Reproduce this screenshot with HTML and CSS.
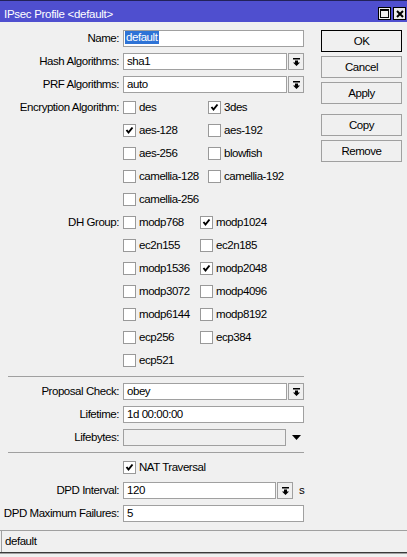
FILE: index.html
```html
<!DOCTYPE html>
<html lang="en">
<head>
<meta charset="utf-8">
<title>IPsec Profile &lt;default&gt;</title>
<link rel="stylesheet" href="styles.css">
</head>
<body>
<div class="window">
  <div class="titlebar">
    <span class="title">IPsec Profile &lt;default&gt;</span>
    <div class="tb-buttons">
      <span class="tb-btn"><svg width="9" height="9" viewBox="0 0 9 9"><rect x="0.5" y="0.5" width="8" height="8" fill="none" stroke="#000"/><rect x="0" y="0" width="9" height="2" fill="#000"/></svg></span>
      <span class="tb-btn"><svg width="8" height="8" viewBox="0 0 8 8"><path d="M1 1L7 7M7 1L1 7" stroke="#000" stroke-width="2"/></svg></span>
    </div>
  </div>

  <div class="main">
    <div class="form">
      <div class="row">
        <span class="label">Name:</span>
        <div class="field name"><span class="selected">default</span></div>
      </div>
      <div class="row">
        <span class="label">Hash Algorithms:</span>
        <div class="combo"><div class="field">sha1</div><span class="drop"><svg width="7" height="8" viewBox="0 0 7 8"><rect width="7" height="1.5"/><path d="M2 2.5h3v2h2L3.5 8 0 4.5h2z"/></svg></span></div>
      </div>
      <div class="row">
        <span class="label">PRF Algorithms:</span>
        <div class="combo"><div class="field">auto</div><span class="drop"><svg width="7" height="8" viewBox="0 0 7 8"><rect width="7" height="1.5"/><path d="M2 2.5h3v2h2L3.5 8 0 4.5h2z"/></svg></span></div>
      </div>

      <div class="group enc">
        <div class="row">
          <span class="label">Encryption Algorithm:</span>
          <div class="checks">
            <span class="check"><span class="box"></span>des</span>
            <span class="check"><span class="box on"><svg width="11" height="11" viewBox="0 0 11 11"><path d="M2.5 5L4.5 7.5L8.5 2.5" fill="none" stroke="#000" stroke-width="2"/></svg></span>3des</span>
          </div>
        </div>
        <div class="row">
          <span class="label"></span>
          <div class="checks">
            <span class="check"><span class="box on"><svg width="11" height="11" viewBox="0 0 11 11"><path d="M2.5 5L4.5 7.5L8.5 2.5" fill="none" stroke="#000" stroke-width="2"/></svg></span>aes-128</span>
            <span class="check"><span class="box"></span>aes-192</span>
          </div>
        </div>
        <div class="row">
          <span class="label"></span>
          <div class="checks">
            <span class="check"><span class="box"></span>aes-256</span>
            <span class="check"><span class="box"></span>blowfish</span>
          </div>
        </div>
        <div class="row">
          <span class="label"></span>
          <div class="checks">
            <span class="check"><span class="box"></span>camellia-128</span>
            <span class="check"><span class="box"></span>camellia-192</span>
          </div>
        </div>
        <div class="row">
          <span class="label"></span>
          <div class="checks">
            <span class="check"><span class="box"></span>camellia-256</span>
          </div>
        </div>
      </div>

      <div class="group dh">
        <div class="row">
          <span class="label">DH Group:</span>
          <div class="checks">
            <span class="check"><span class="box"></span>modp768</span>
            <span class="check"><span class="box on"><svg width="11" height="11" viewBox="0 0 11 11"><path d="M2.5 5L4.5 7.5L8.5 2.5" fill="none" stroke="#000" stroke-width="2"/></svg></span>modp1024</span>
          </div>
        </div>
        <div class="row">
          <span class="label"></span>
          <div class="checks">
            <span class="check"><span class="box"></span>ec2n155</span>
            <span class="check"><span class="box"></span>ec2n185</span>
          </div>
        </div>
        <div class="row">
          <span class="label"></span>
          <div class="checks">
            <span class="check"><span class="box"></span>modp1536</span>
            <span class="check"><span class="box on"><svg width="11" height="11" viewBox="0 0 11 11"><path d="M2.5 5L4.5 7.5L8.5 2.5" fill="none" stroke="#000" stroke-width="2"/></svg></span>modp2048</span>
          </div>
        </div>
        <div class="row">
          <span class="label"></span>
          <div class="checks">
            <span class="check"><span class="box"></span>modp3072</span>
            <span class="check"><span class="box"></span>modp4096</span>
          </div>
        </div>
        <div class="row">
          <span class="label"></span>
          <div class="checks">
            <span class="check"><span class="box"></span>modp6144</span>
            <span class="check"><span class="box"></span>modp8192</span>
          </div>
        </div>
        <div class="row">
          <span class="label"></span>
          <div class="checks">
            <span class="check"><span class="box"></span>ecp256</span>
            <span class="check"><span class="box"></span>ecp384</span>
          </div>
        </div>
        <div class="row">
          <span class="label"></span>
          <div class="checks">
            <span class="check"><span class="box"></span>ecp521</span>
          </div>
        </div>
      </div>

      <div class="sep"></div>

      <div class="row">
        <span class="label">Proposal Check:</span>
        <div class="combo"><div class="field">obey</div><span class="drop"><svg width="7" height="8" viewBox="0 0 7 8"><rect width="7" height="1.5"/><path d="M2 2.5h3v2h2L3.5 8 0 4.5h2z"/></svg></span></div>
      </div>
      <div class="row">
        <span class="label">Lifetime:</span>
        <div class="field">1d 00:00:00</div>
      </div>
      <div class="row">
        <span class="label">Lifebytes:</span>
        <div class="combo">
          <div class="field disabled"></div>
          <span class="expand"><svg width="9" height="5" viewBox="0 0 9 5"><path d="M0 0h9L4.5 5z"/></svg></span>
        </div>
      </div>

      <div class="sep sep-b"></div>

      <div class="row">
        <span class="label"></span>
        <div class="checks">
          <span class="check"><span class="box on"><svg width="11" height="11" viewBox="0 0 11 11"><path d="M2.5 5L4.5 7.5L8.5 2.5" fill="none" stroke="#000" stroke-width="2"/></svg></span>NAT Traversal</span>
        </div>
      </div>
      <div class="row">
        <span class="label">DPD Interval:</span>
        <div class="combo"><div class="field">120</div><span class="drop"><svg width="7" height="8" viewBox="0 0 7 8"><rect width="7" height="1.5"/><path d="M2 2.5h3v2h2L3.5 8 0 4.5h2z"/></svg></span><span class="unit">s</span></div>
      </div>
      <div class="row">
        <span class="label">DPD Maximum Failures:</span>
        <div class="field">5</div>
      </div>
    </div>

    <div class="actions">
      <span class="btn default">OK</span>
      <span class="btn">Cancel</span>
      <span class="btn">Apply</span>
      <span class="btn spaced">Copy</span>
      <span class="btn">Remove</span>
    </div>
  </div>

  <div class="status"><span class="status-cell">default</span></div>
  <div class="frame-bottom"></div>
</div>
</body>
</html>
```

FILE: styles.css
```css
body {
  margin: 0;
  background: #f0f0f0;
  color: #000;
  font: 11.5px/13px "Liberation Sans", Arial, sans-serif;
  letter-spacing: -0.45px;
}

.window {
  width: 407px;
  height: 557px;
  display: flex;
  flex-direction: column;
  overflow: hidden;
}

/* title bar */
.titlebar {
  height: 22px;
  box-sizing: border-box;
  border-top: 1px solid #22225a;
  background: #4f4fcf;
  color: #fff;
  display: flex;
  justify-content: space-between;
  align-items: flex-start;
  padding: 7px 1px 0 4px;
  letter-spacing: -0.3px;
}

.tb-buttons {
  display: flex;
  gap: 2px;
  margin-top: -1px;
}

.tb-btn {
  width: 13px;
  height: 13px;
  box-sizing: border-box;
  border: 1px solid #000;
  background: #ececec;
  display: flex;
  align-items: center;
  justify-content: center;
}

/* main area */
.main {
  display: flex;
  padding: 5px 0 5px 8px;
}

.form {
  width: 296px;
}

.row {
  display: grid;
  grid-template-columns: 111px 181px;
  column-gap: 4px;
  height: 23px;
  align-items: center;
}

/* labels hug the field column; long ones spill to the left */
.label {
  justify-self: end;
  white-space: nowrap;
}

.field {
  height: 17px;
  box-sizing: border-box;
  border: 1px solid #a0a0a0;
  background: #fff;
  padding: 0 3px;
  line-height: 15px;
  white-space: nowrap;
  overflow: hidden;
}

.field.name {
  padding-left: 1px;
}

.selected {
  display: inline-block;
  background: #2e73d6;
  color: #fff;
  padding: 0 2px 0 1px;
  line-height: 13px;
  vertical-align: top;
}

.field.disabled {
  background: #f0f0f0;
}

.combo {
  display: flex;
  gap: 1px;
  align-items: center;
}

.combo .field {
  flex: 1;
}

.drop {
  width: 16px;
  height: 17px;
  box-sizing: border-box;
  border: 1px solid #a0a0a0;
  background: #f0f0f0;
  display: flex;
  align-items: center;
  justify-content: center;
}

.expand {
  width: 16px;
  display: flex;
  justify-content: center;
  padding-left: 1px;
}

.unit {
  width: 5px;
  padding-left: 5px;
}

/* checkbox grids */
.checks {
  display: grid;
  grid-template-columns: 85px auto;
}

.dh .checks {
  grid-template-columns: 77px auto;
}

.check {
  display: flex;
  align-items: center;
  gap: 3px;
  white-space: nowrap;
}

.box {
  width: 13px;
  height: 13px;
  box-sizing: border-box;
  border: 1px solid #999;
  background: #fff;
  display: flex;
}

.sep {
  height: 1px;
  background: #a0a0a0;
  margin: 4px 0 3px;
}

.sep-b {
  margin: 3px 0 3px;
}

/* button column */
.actions {
  width: 81px;
  margin-left: 17px;
  padding-top: 3px;
  display: flex;
  flex-direction: column;
  gap: 4px;
}

.btn {
  height: 22px;
  box-sizing: border-box;
  border: 1px solid #a0a0a0;
  background: #f0f0f0;
  text-align: center;
  line-height: 20px;
}

.btn.default {
  border-color: #000;
}

.btn.spaced {
  margin-top: 6px;
}

/* status bar */
.status {
  height: 22px;
  box-sizing: border-box;
  border-top: 1px solid #a0a0a0;
  padding-left: 1px;
  display: flex;
}

.status-cell {
  flex: 1;
  border-left: 1px solid #a0a0a0;
  padding-left: 3px;
  line-height: 21px;
}

.frame-bottom {
  border-top: 1px solid #3a3a3a;
  height: 4px;
  box-shadow: inset 0 1px 0 #a0a0a0;
}
```
